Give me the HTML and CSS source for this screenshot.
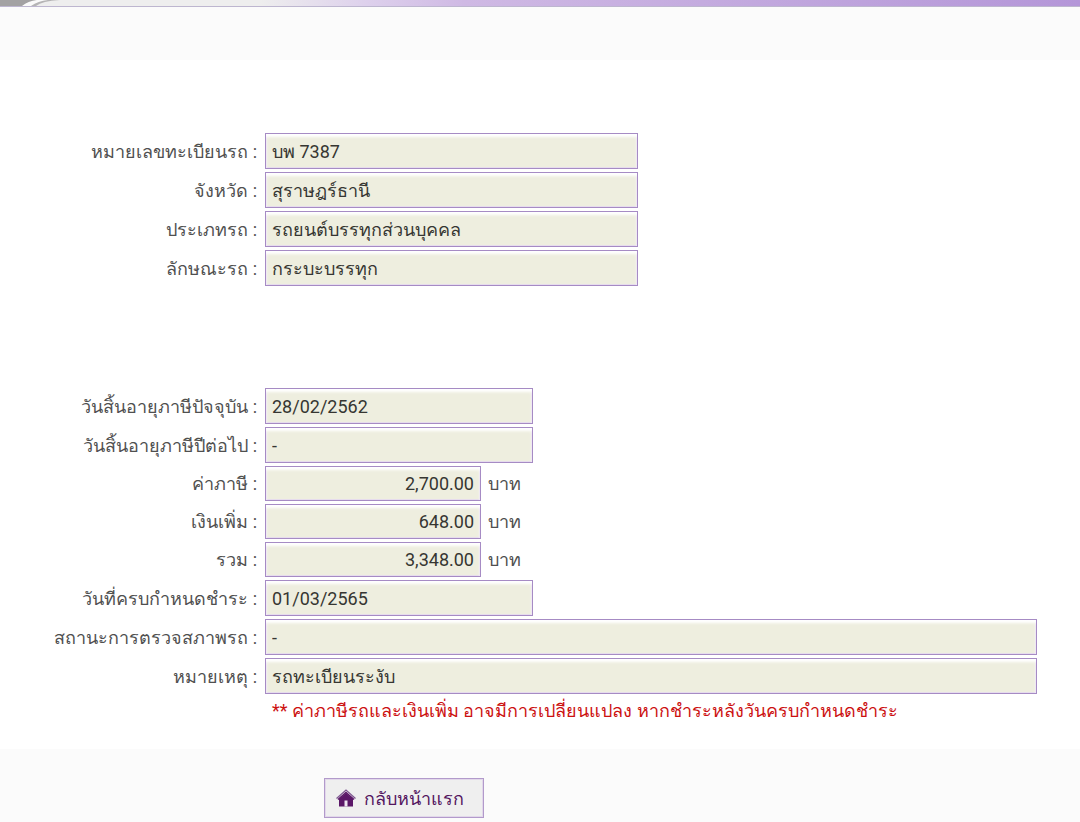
FILE: index.html
```
<!DOCTYPE html>
<html lang="th">

<head>
    <meta charset="UTF-8">
    <meta name="viewport" content="width=device-width, initial-scale=1.0">
    <title>ตรวจสอบภาษีรถ</title>
    <link rel="stylesheet" href="styles.css">
</head>

<body>
    <header class="banner">
        <svg class="banner-curve" viewBox="0 0 60 6" aria-hidden="true">
            <path d="M0 0H42Q29 1 23 6H0Z" fill="#a3a2a3" />
            <path d="M37 0H60Q42 1 31 6H22Q28 1 37 0Z" fill="#fafafa" />
            <path d="M48 0H60Q42 1 36 6H31Q38 1 48 0Z" fill="#b5b4b5" />
        </svg>
    </header>
    <main class="content">
        <form class="tax-form">
            <div class="group">
                <div class="row">
                    <label for="plate">หมายเลขทะเบียนรถ :</label>
                    <input class="field medium" id="plate" type="text" value="บพ 7387" readonly>
                </div>
                <div class="row">
                    <label for="province">จังหวัด :</label>
                    <input class="field medium" id="province" type="text" value="สุราษฎร์ธานี" readonly>
                </div>
                <div class="row">
                    <label for="car-type">ประเภทรถ :</label>
                    <input class="field medium" id="car-type" type="text" value="รถยนต์บรรทุกส่วนบุคคล" readonly>
                </div>
                <div class="row">
                    <label for="car-style">ลักษณะรถ :</label>
                    <input class="field medium" id="car-style" type="text" value="กระบะบรรทุก" readonly>
                </div>
            </div>
            <div class="group">
                <div class="row">
                    <label for="expire">วันสิ้นอายุภาษีปัจจุบัน :</label>
                    <input class="field short" id="expire" type="text" value="28/02/2562" readonly>
                </div>
                <div class="row">
                    <label for="next-expire">วันสิ้นอายุภาษีปีต่อไป :</label>
                    <input class="field short" id="next-expire" type="text" value="-" readonly>
                </div>
                <div class="row">
                    <label for="tax">ค่าภาษี :</label>
                    <input class="field amount" id="tax" type="text" value="2,700.00" readonly>
                    <span class="unit">บาท</span>
                </div>
                <div class="row">
                    <label for="extra">เงินเพิ่ม :</label>
                    <input class="field amount" id="extra" type="text" value="648.00" readonly>
                    <span class="unit">บาท</span>
                </div>
                <div class="row">
                    <label for="total">รวม :</label>
                    <input class="field amount" id="total" type="text" value="3,348.00" readonly>
                    <span class="unit">บาท</span>
                </div>
                <div class="row">
                    <label for="due">วันที่ครบกำหนดชำระ :</label>
                    <input class="field short" id="due" type="text" value="01/03/2565" readonly>
                </div>
                <div class="row">
                    <label for="inspection">สถานะการตรวจสภาพรถ :</label>
                    <input class="field long" id="inspection" type="text" value="-" readonly>
                </div>
                <div class="row">
                    <label for="remark">หมายเหตุ :</label>
                    <input class="field long" id="remark" type="text" value="รถทะเบียนระงับ" readonly>
                </div>
            </div>
            <p class="warning">** ค่าภาษีรถและเงินเพิ่ม อาจมีการเปลี่ยนแปลง หากชำระหลังวันครบกำหนดชำระ</p>
        </form>
    </main>
    <footer class="actions">
        <button class="home-button" type="button">
            <svg class="home-icon" viewBox="0 0 20 18" aria-hidden="true">
                <path d="M3 10L10 4L17 10V17.500H3Z" fill="#5b1768" />
                <path d="M0.500 9.500L10 1L19.500 9.500" fill="none" stroke="#7d5690" stroke-width="1.200" />
                <path d="M2 10.500L10 3.500L18 10.500" fill="none" stroke="#5b1768" stroke-width="1.500" />
                <path d="M8.500 11.500H11.500V17.500H8.500Z" fill="#efe6f2" />
            </svg>
            กลับหน้าแรก
        </button>
    </footer>
</body>

</html>
```

FILE: styles.css
```
* {
    box-sizing: border-box;
}

body {
    margin: 0;
    font-family: Roboto, sans-serif;
    font-size: 18px;
    color: #505050;
    background-color: #fbfbfb;
}

.banner {
    height: 7px;
    border-bottom: 1px solid #bdb6cf;
    background: linear-gradient(90deg, #eeeeee 0%, #eeeeee 24%, #ddd0ec 34%, #cfb9e4 43%, #c4abdf 65%, #b496d8 100%);
}

.banner-curve {
    display: block;
    width: 60px;
    height: 6px;
}

.content {
    margin-top: 53px;
    padding: 73px 43px 24px 0;
    background: #ffffff;
}

.group {
    display: flex;
    flex-direction: column;
    gap: 3px;
    margin-bottom: 102px;
}

.group + .group {
    margin-bottom: 0;
}

.row {
    display: flex;
    align-items: center;
}

.row label {
    flex: 0 0 265px;
    padding-right: 8px;
    text-align: right;
    white-space: nowrap;
}

.field {
    height: 36px;
    padding: 0 6px;
    border: 1px solid #a68bc4;
    border-radius: 0;
    outline: none;
    background: #eeeedf;
    box-shadow: inset 0 3px 3px #ffffff, inset 0 0 0 1px #e6dced;
    font: inherit;
    color: #363632;
}

.medium {
    width: 373px;
}

.short {
    width: 268px;
}

.amount {
    width: 216px;
    height: 35px;
    text-align: right;
}

.long {
    flex: 1;
    min-width: 0;
}

.unit {
    margin-left: 7px;
}

.warning {
    margin: 3px 0 0 272px;
    line-height: 28px;
    color: #cc1111;
}

.actions {
    padding: 29px 0 4px 324px;
}

.home-button {
    display: flex;
    align-items: center;
    gap: 8px;
    height: 40px;
    padding: 0 19px 0 11px;
    border: 1px solid #b29acb;
    background: #efefef;
    box-shadow: inset 0 0 0 1px #e2d8ea;
    font: inherit;
    color: #541660;
}

.home-icon {
    width: 20px;
    height: 18px;
}
```
